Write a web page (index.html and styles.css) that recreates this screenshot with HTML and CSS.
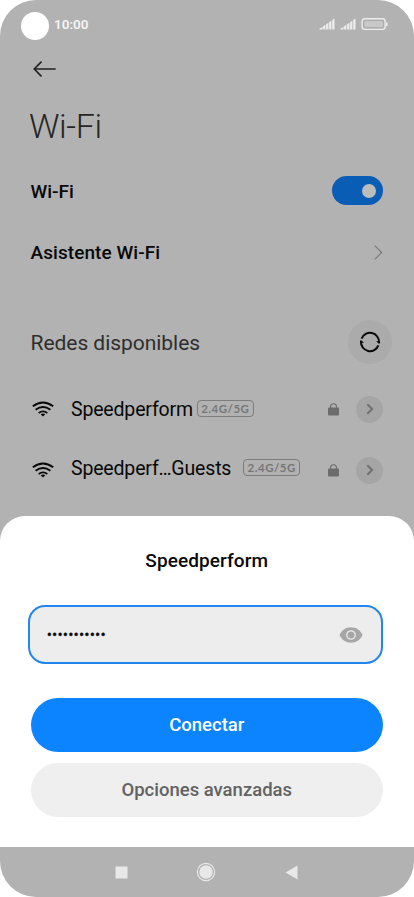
FILE: index.html
```html
<!DOCTYPE html>
<html lang="es">
<head>
<meta charset="utf-8">
<title>Wi-Fi</title>
<link rel="stylesheet" href="styles.css">
</head>
<body>
<div class="phone">
  <header class="status">
    <span class="camera"></span>
    <span class="clock">10:00</span>
    <svg class="indicators" width="70" height="14" viewBox="0 0 70 14">
      <g fill="#ececec">
        <path d="M.5 11.500v-1l3-1.500v2.500zM4.100 11.500V8.200l2.300-1.400v4.700zM7.100 11.500V6.200l2.300-1.400v6.700zM10.100 11.500V4.200l2.300-1.500v8.800zM13.200 11.500V1.900l2.300-1.500v11.100z"/>
        <path d="M21.500 11.500v-1l3-1.500v2.500zM25.100 11.500V8.200l2.300-1.400v4.700zM28.100 11.500V6.200l2.300-1.400v6.700zM31.100 11.500V4.200l2.300-1.500v8.800zM34.200 11.500V1.900l2.300-1.500v11.100z"/>
        <rect x="67" y="4.200" width="1.500" height="4" rx=".6"/>
      </g>
      <rect x="43.100" y=".8" width="23" height="10.600" rx="2.600" fill="none" stroke="#ececec" stroke-width="1.400"/>
      <rect x="45" y="2.600" width="19.300" height="7" rx="1" fill="#c8c8c8" stroke="#a3a3a3" stroke-width=".6"/>
    </svg>
  </header>
  <div class="back">
    <svg width="23" height="16" viewBox="0 0 23 16" fill="none" stroke="#222" stroke-width="1.700" stroke-linecap="round" stroke-linejoin="round"><path d="M22 8H1.200M8 1.200 1.200 8 8 14.800"/></svg>
  </div>
  <h1 class="title">Wi-Fi</h1>
  <div class="row row-wifi">
    <span class="label label-wifi">Wi-Fi</span>
    <span class="toggle"><span class="knob"></span></span>
  </div>
  <div class="row row-assistant">
    <span class="label label-assistant">Asistente Wi-Fi</span>
    <svg width="9" height="15" viewBox="0 0 9 15" fill="none" stroke="#7b7b7b" stroke-width="1.200"><path d="m.8.7 6.800 6.800-6.800 6.800"/></svg>
  </div>
  <div class="row row-available">
    <span class="heading">Redes disponibles</span>
    <span class="refresh">
      <svg width="22" height="22" viewBox="0 0 22 22" fill="none" stroke="#080808" stroke-width="2"><path d="M2.600 7.700A9 9 0 0 1 20 11.500M2 10.500a9 9 0 0 0 17.400 3.800"/><path d="M17.200 10.200h3.800v2.300h-1.500zM1 9.500h1.500l2.500 2.300H1z" fill="#080808" stroke="none"/></svg>
    </span>
  </div>
  <div class="row network">
    <svg class="wifi" width="22" height="16" viewBox="0 0 22 16"><g fill="none" stroke="#080808" stroke-width="1.900"><path d="M.8 5.300Q11-2.300 21.200 5.300M3.600 8.700q7.400-5.400 14.800 0M6.700 11.900q4.300-3.100 8.600 0"/></g><path d="M8.700 13.200q2.300-1.300 4.600 0L11 15.500z" fill="#080808"/></svg>
    <span class="name">Speedperform</span>
    <span class="band">2.4G/5G</span>
    <svg class="lock" width="11" height="13" viewBox="0 0 11 13"><rect y="4.500" width="11" height="8" rx="1" fill="#6c6c6c"/><path d="M2.600 5V3.400a2.900 2.700 0 0 1 5.800 0V5" fill="none" stroke="#6c6c6c" stroke-width="1.100"/></svg>
    <span class="go"><svg width="8" height="12" viewBox="0 0 8 12" fill="none" stroke="#717171" stroke-width="2"><path d="m1.300 1.300 4.800 4.700-4.800 4.700"/></svg></span>
  </div>
  <div class="row network network-guest">
    <svg class="wifi" width="22" height="16" viewBox="0 0 22 16"><g fill="none" stroke="#080808" stroke-width="1.900"><path d="M.8 5.300Q11-2.300 21.200 5.300M3.600 8.700q7.400-5.400 14.800 0M6.700 11.900q4.300-3.100 8.600 0"/></g><path d="M8.700 13.200q2.300-1.300 4.600 0L11 15.500z" fill="#080808"/></svg>
    <span class="name">Speedperf…Guests</span>
    <span class="band">2.4G/5G</span>
    <svg class="lock" width="11" height="13" viewBox="0 0 11 13"><rect y="4.500" width="11" height="8" rx="1" fill="#6c6c6c"/><path d="M2.600 5V3.400a2.900 2.700 0 0 1 5.800 0V5" fill="none" stroke="#6c6c6c" stroke-width="1.100"/></svg>
    <span class="go"><svg width="8" height="12" viewBox="0 0 8 12" fill="none" stroke="#717171" stroke-width="2"><path d="m1.300 1.300 4.800 4.700-4.800 4.700"/></svg></span>
  </div>
  <section class="sheet">
    <h2 class="sheet-title">Speedperform</h2>
    <div class="field">
      <span class="password">•••••••••••</span>
      <svg width="24" height="16" viewBox="0 0 24 16"><path d="M.5 8C2.800 3 7 .3 12 .3S21.200 3 23.500 8C21.200 13 17 15.700 12 15.700S2.800 13 .5 8z" fill="#a6a6a6"/><circle cx="12" cy="8" r="4.200" fill="#a6a6a6" stroke="#ededed" stroke-width="1.300"/></svg>
    </div>
    <div class="button primary">Conectar</div>
    <div class="button secondary">Opciones avanzadas</div>
  </section>
  <nav class="navbar">
    <svg width="13" height="13" viewBox="0 0 13 13"><rect x=".5" y=".5" width="12" height="12" fill="#e8e8e8"/></svg>
    <svg width="20" height="20" viewBox="0 0 20 20"><circle cx="10" cy="10" r="8.600" fill="none" stroke="#e8e8e8" stroke-width="1.200"/><circle cx="10" cy="10" r="6.700" fill="#e8e8e8"/></svg>
    <svg width="13" height="15" viewBox="0 0 13 15"><path d="M.5 7.500 12.500.6v13.800z" fill="#e8e8e8"/></svg>
  </nav>
</div>
</body>
</html>
```
FILE: styles.css
```css
* { box-sizing: border-box; }
body { margin: 0; background: #fff; font-family: Roboto, "Liberation Sans", sans-serif; }
svg { display: block; flex: none; }
.phone { width: 414px; height: 897px; display: flex; flex-direction: column; background: #b2b2b2; border-radius: 36px; overflow: hidden; white-space: nowrap; }
.status { height: 52px; padding: 0 25px 0 20.500px; display: flex; align-items: center; }
.camera { width: 28px; height: 28px; border-radius: 50%; background: #fff; }
.clock { margin: -4px auto 0 5.500px; font-size: 13.500px; font-weight: 600; letter-spacing: 0; color: #f4f4f4; }
.indicators { margin-top: -2px; }
.back { height: 34px; padding-left: 33px; display: flex; align-items: center; }
.title { height: 80px; margin: 0; padding-left: 29px; font-size: 34px; font-weight: 300; line-height: 81px; letter-spacing: -.4px; color: #262626; }
.row { display: flex; align-items: center; justify-content: space-between; padding: 0 31px 0 30.500px; }
.row-wifi { height: 50px; }
.label { font-size: 19px; font-weight: 500; color: #080808; }
.label-assistant { letter-spacing: .07px; }
.toggle { width: 51px; height: 29px; margin-top: -1px; border-radius: 15px; padding-right: 7px; background: #0a5db5; display: flex; align-items: center; justify-content: flex-end; }
.knob { width: 14px; height: 14px; border-radius: 50%; background: #bcbcbc; }
.row-assistant { height: 73px; }
.row-available { height: 107px; padding-right: 22px; }
.heading { font-size: 21px; letter-spacing: -.04px; color: #2e2e2e; }
.refresh { width: 44px; height: 44px; margin-top: -2px; border-radius: 50%; background: #ababab; display: flex; align-items: center; justify-content: center; }
.network { height: 26px; justify-content: flex-start; padding-left: 32px; }
.network-guest { margin-top: 35px; }
.name { margin-left: 17px; font-size: 19.500px; letter-spacing: -.17px; color: #080808; }
.band { width: 57px; height: 17px; margin: -1px 0 0 4px; border: 1px solid #7d7d7d; border-radius: 4px; font: 700 11.500px/15px Lato, sans-serif; letter-spacing: .5px; text-align: center; color: #777; }
.network-guest .name { margin-top: -3px; }
.network-guest .band { margin: -5px 0 0 12px; }
.lock { margin-left: auto; }
.go { width: 27px; height: 27px; margin-left: 17px; border-radius: 50%; background: #a5a5a5; display: flex; align-items: center; justify-content: center; }
.sheet { height: 331px; margin-top: auto; background: #fff; border-radius: 25px 25px 0 0; padding: 0 31px 0 30.500px; }
.sheet-title { height: 89px; margin: 0; font-size: 19px; font-weight: 500; line-height: 89px; letter-spacing: .1px; text-align: center; color: #080808; }
.field { height: 59px; margin: 0 0 34px -2.500px; border: 2px solid #2385ee; border-radius: 17px; background: #ededed; display: flex; align-items: center; justify-content: space-between; padding: 0 18px 0 17px; }
.password { font-size: 14px; letter-spacing: .65px; -webkit-text-stroke: .5px #080808; color: #080808; }
.button { height: 54px; border-radius: 27px; font-size: 18.500px; font-weight: 500; line-height: 55px; text-align: center; }
.primary { background: #0d84ff; color: #fff; }
.secondary { margin-top: 11px; background: #efefef; color: #626262; }
.navbar { height: 50px; display: flex; align-items: center; justify-content: space-between; padding: 0 116px 0 114.500px; }
```
